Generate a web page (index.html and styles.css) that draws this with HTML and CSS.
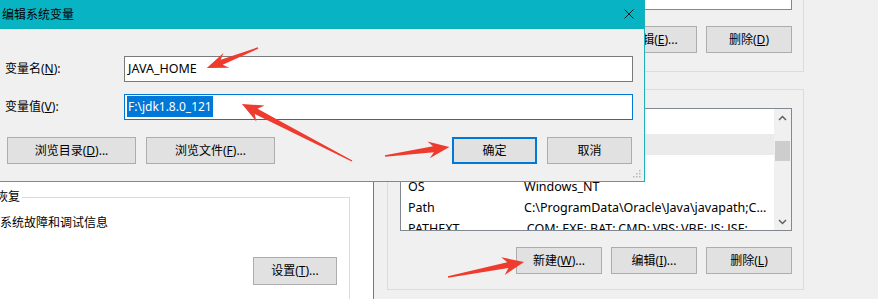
FILE: index.html
```html
<!DOCTYPE html>
<html lang="zh-CN">
<head>
    <meta charset="UTF-8">
    <title>编辑系统变量</title>
    <link rel="stylesheet" href="styles.css">
</head>
<body>
    <div class="desktop">
        <!-- 系统属性（后面的窗口） -->
        <div class="sys-window">
            <fieldset class="sys-group">
                <legend>启动和故障恢复</legend>
                <p class="sys-text">系统启动、系统故障和调试信息</p>
                <div class="sys-actions">
                    <button class="btn">设置(<u>T</u>)...</button>
                </div>
            </fieldset>
        </div>

        <!-- 环境变量窗口 -->
        <div class="env-window">
            <div class="group">
                <div class="listbox listbox-user"></div>
                <div class="btn-row">
                    <button class="btn">新建(<u>N</u>)...</button>
                    <button class="btn">编辑(<u>E</u>)...</button>
                    <button class="btn">删除(<u>D</u>)</button>
                </div>
            </div>
            <div class="group group-system">
                <div class="listbox listbox-system">
                    <div class="list-body">
                        <div class="list-head"><span class="col-name">变量</span><span class="col-value">值</span></div>
                        <div class="list-row selected"><span class="col-name">asl.log</span><span class="col-value">Destination=file</span></div>
                        <div class="list-row"><span class="col-name">OnlineServices</span><span class="col-value">Online Services</span></div>
                        <div class="list-row"><span class="col-name">OS</span><span class="col-value">Windows_NT</span></div>
                        <div class="list-row"><span class="col-name">Path</span><span class="col-value">C:\ProgramData\Oracle\Java\javapath;C...</span></div>
                        <div class="list-row"><span class="col-name">PATHEXT</span><span class="col-value">.COM;.EXE;.BAT;.CMD;.VBS;.VBE;.JS;.JSE;</span></div>
                    </div>
                    <div class="scrollbar">
                        <div class="scroll-btn">
                            <svg width="9" height="6" viewBox="0 0 9 6"><polyline points="1,5 4.5,1.5 8,5" fill="none" stroke="#606060" stroke-width="1.5"/></svg>
                        </div>
                        <div class="scroll-track"><div class="scroll-thumb"></div></div>
                        <div class="scroll-btn">
                            <svg width="9" height="6" viewBox="0 0 9 6"><polyline points="1,1 4.5,4.5 8,1" fill="none" stroke="#606060" stroke-width="1.5"/></svg>
                        </div>
                    </div>
                </div>
                <div class="btn-row">
                    <button class="btn">新建(<u>W</u>)...</button>
                    <button class="btn">编辑(<u>I</u>)...</button>
                    <button class="btn">删除(<u>L</u>)</button>
                </div>
            </div>
        </div>

        <!-- 编辑系统变量对话框 -->
        <div class="dialog">
            <div class="titlebar">
                <span class="title">编辑系统变量</span>
                <svg class="close" width="10" height="10" viewBox="0 0 10 10">
                    <line x1="0.5" y1="0.5" x2="9.5" y2="9.5" stroke="#1a1a1a" stroke-width="1"/>
                    <line x1="9.5" y1="0.5" x2="0.5" y2="9.5" stroke="#1a1a1a" stroke-width="1"/>
                </svg>
            </div>
            <div class="dialog-body">
                <div class="field">
                    <label>变量名(<u>N</u>):</label>
                    <div class="textbox">JAVA_HOME</div>
                </div>
                <div class="field">
                    <label>变量值(<u>V</u>):</label>
                    <div class="textbox focused"><span class="selection">F:\jdk1.8.0_121</span></div>
                </div>
                <div class="dialog-buttons">
                    <div class="btn-group">
                        <button class="btn btn-wide">浏览目录(<u>D</u>)...</button>
                        <button class="btn btn-wide">浏览文件(<u>F</u>)...</button>
                    </div>
                    <div class="btn-group btn-group-right">
                        <button class="btn btn-default">确定</button>
                        <button class="btn">取消</button>
                    </div>
                </div>
            </div>
            <svg class="grip" width="9" height="9" viewBox="0 0 9 9">
                <rect x="7" y="1" width="1.5" height="1.5" fill="#b8b8b8"/>
                <rect x="4" y="4" width="1.5" height="1.5" fill="#b8b8b8"/>
                <rect x="7" y="4" width="1.5" height="1.5" fill="#b8b8b8"/>
                <rect x="1" y="7" width="1.5" height="1.5" fill="#b8b8b8"/>
                <rect x="4" y="7" width="1.5" height="1.5" fill="#b8b8b8"/>
                <rect x="7" y="7" width="1.5" height="1.5" fill="#b8b8b8"/>
            </svg>
        </div>

        <!-- 红色箭头标注 -->
        <svg class="arrows" width="878" height="299" viewBox="0 0 878 299">
            <g fill="#ef3b2d">
                <polygon transform="translate(258 48) rotate(158.6)" points="0,-0.7 39,-2.6 34,-8 55,0 34,8 39,2.6 0,0.7"/>
                <polygon transform="translate(352 161) rotate(-152.6)" points="0,-0.7 108,-3 103,-9 124,0 103,9 108,3 0,0.7"/>
                <polygon transform="translate(385 156) rotate(-8)" points="0,-0.8 49,-3 44,-8.5 65,0 44,8.5 49,3 0,0.8"/>
                <polygon transform="translate(448 277) rotate(-11.2)" points="0,-0.8 61,-3 56,-9 77.5,0 56,9 61,3 0,0.8"/>
            </g>
        </svg>
    </div>
</body>
</html>
```

FILE: styles.css
```css
body {
    margin: 0;
    font-family: "Noto Sans", "Noto Sans CJK SC", sans-serif;
    font-size: 12px;
    color: #000;
}
u {
    text-decoration: underline;
}
.desktop {
    position: relative;
    width: 878px;
    height: 299px;
    overflow: hidden;
    background-color: #f0f0f0;
}

/* buttons */
.btn {
    width: 86px;
    height: 27px;
    padding: 0;
    margin: 0;
    background-color: #e1e1e1;
    border: 1px solid #adadad;
    font-family: inherit;
    font-size: 12px;
    line-height: 16px;
    color: #000;
    box-sizing: border-box;
}

/* system properties window */
.sys-window {
    position: absolute;
    left: 0;
    top: 0;
    width: 373px;
    height: 299px;
    padding-top: 190px;
    background-color: #fff;
    box-sizing: border-box;
}
.sys-group {
    width: 422px;
    height: 140px;
    margin: 0 0 0 -72px;
    padding: 0 12px 0 5px;
    border: 1px solid #dcdcdc;
    box-sizing: border-box;
}
.sys-group legend {
    padding: 0 2px;
    line-height: 14px;
}
.sys-text {
    margin: 11px 0 0 6px;
    line-height: 16px;
}
.sys-actions {
    display: flex;
    justify-content: flex-end;
    margin-top: 26px;
}
.sys-actions .btn {
    width: 84px;
    height: 28px;
}

/* environment variables window */
.env-window {
    position: absolute;
    left: 373px;
    top: -100px;
    width: 520px;
    height: 420px;
    padding-left: 13px;
    background-color: #f0f0f0;
    border-left: 1px solid #7a7a7a;
    box-sizing: border-box;
}
.group {
    width: 417px;
    padding: 8px 11px 18px 12px;
    border: 1px solid #dcdcdc;
    box-sizing: border-box;
}
.group-system {
    margin-top: 17px;
    padding-top: 18px;
    padding-bottom: 15px;
}
.listbox {
    background-color: #fff;
    border: 1px solid #828790;
    box-sizing: border-box;
}
.listbox-user {
    height: 101px;
}
.listbox-system {
    display: flex;
    height: 123px;
    font-size: 12.5px;
}
.btn-row {
    display: flex;
    justify-content: flex-end;
    gap: 9px;
    margin-top: 16px;
}
.list-body {
    flex: 1;
    overflow: hidden;
}
.list-head {
    display: flex;
    height: 25px;
    align-items: center;
    color: #4c607a;
}
.list-row {
    display: flex;
    height: 21px;
    align-items: center;
    line-height: 16px;
    white-space: nowrap;
}
.list-row.selected {
    background-color: #ebebeb;
}
.col-name {
    width: 116px;
    padding-left: 7px;
    flex-shrink: 0;
}
.col-value {
    flex-shrink: 0;
}
.scrollbar {
    display: flex;
    flex-direction: column;
    width: 17px;
    background-color: #f0f0f0;
}
.scroll-btn {
    display: flex;
    height: 17px;
    align-items: center;
    justify-content: center;
}
.scroll-track {
    flex: 1;
    padding: 15px 1px 0;
}
.scroll-thumb {
    height: 20px;
    background-color: #cdcdcd;
}

/* edit variable dialog */
.dialog {
    position: absolute;
    left: -6px;
    top: 0;
    width: 651px;
    height: 182px;
    background-color: #f0f0f0;
    border: 1px solid #1cb2b9;
    border-top: none;
    box-sizing: border-box;
}
.titlebar {
    display: flex;
    height: 29px;
    align-items: center;
    justify-content: space-between;
    padding: 0 10px 0 7px;
    background-color: #08b4c3;
    border-bottom: 1px solid #0cb0b4;
    box-sizing: border-box;
}
.title {
    font-size: 12px;
    line-height: 16px;
    margin-top: 1px;
}
.dialog-body {
    padding: 27px 11px 0 10px;
}
.field {
    display: flex;
    align-items: center;
}
.field + .field {
    margin-top: 12px;
}
.field label {
    width: 119px;
    line-height: 16px;
}
.textbox {
    width: 509px;
    height: 26px;
    padding: 0 3px;
    background-color: #fff;
    border: 1px solid #7a7a7a;
    font-size: 12.5px;
    line-height: 24px;
    box-sizing: border-box;
}
.textbox.focused {
    border-color: #0078d7;
    padding-left: 2px;
    font-size: 12px;
}
.selection {
    padding: 2px 1px;
    background-color: #0078d7;
    color: #fff;
}
.dialog-buttons {
    display: flex;
    margin-top: 17px;
    padding: 0 1px 0 2px;
}
.btn-group {
    display: flex;
    gap: 10px;
}
.btn-group-right {
    margin-left: auto;
}
.btn-wide {
    width: 129px;
}
.btn-group-right .btn {
    width: 85px;
}
.btn-default {
    border: 2px solid #0078d7;
}
.grip {
    position: absolute;
    right: 3px;
    bottom: 3px;
}

.arrows {
    position: absolute;
    left: 0;
    top: 0;
    pointer-events: none;
}
```
